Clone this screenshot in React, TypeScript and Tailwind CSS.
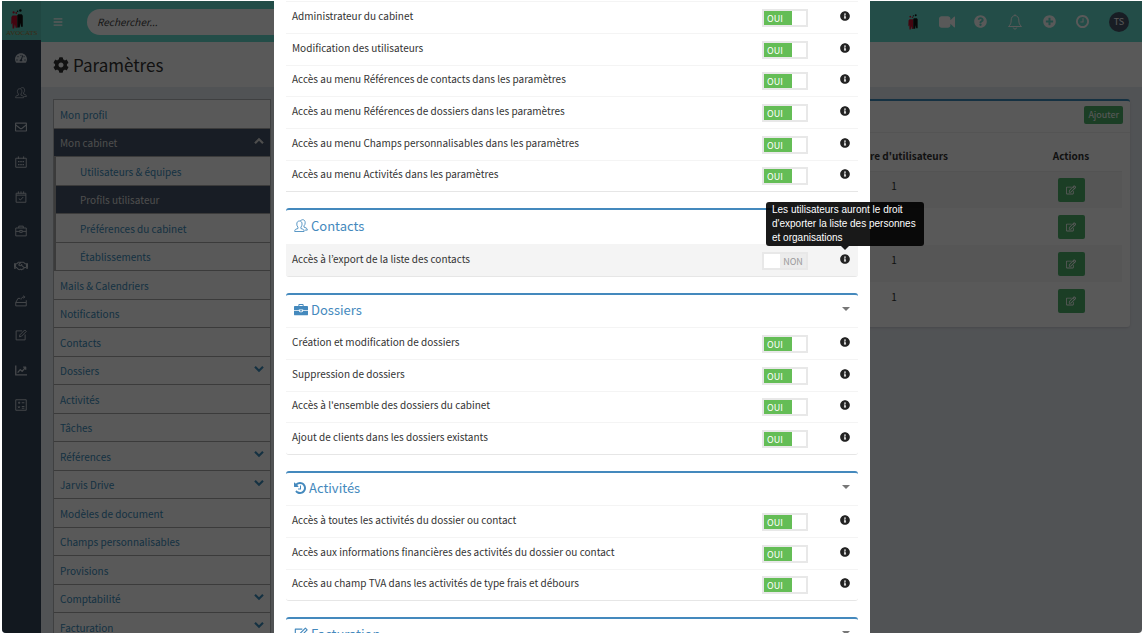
import { useState } from "react"
import type { ReactNode } from "react"
import {
  FaBars,
  FaCog,
  FaInfoCircle,
  FaPlusCircle,
  FaQuestionCircle,
  FaRegEdit,
  FaRegEnvelope,
  FaRegHandshake,
  FaTachometerAlt,
} from "react-icons/fa"

type MenuEntry = {
  label: string
  kind?: "parent" | "child" | "active"
  chevron?: boolean
}

const menu: MenuEntry[] = [
  { label: "Mon profil" },
  { label: "Mon cabinet", kind: "parent" },
  { label: "Utilisateurs & équipes", kind: "child" },
  { label: "Profils utilisateur", kind: "active" },
  { label: "Préférences du cabinet", kind: "child" },
  { label: "Établissements", kind: "child" },
  { label: "Mails & Calendriers" },
  { label: "Notifications" },
  { label: "Contacts" },
  { label: "Dossiers", chevron: true },
  { label: "Activités" },
  { label: "Tâches" },
  { label: "Références", chevron: true },
  { label: "Jarvis Drive", chevron: true },
  { label: "Modèles de document" },
  { label: "Champs personnalisables" },
  { label: "Provisions" },
  { label: "Comptabilité", chevron: true },
  { label: "Facturation", chevron: true },
]

const cabinetRights = [
  "Administrateur du cabinet",
  "Modification des utilisateurs",
  "Accès au menu Références de contacts dans les paramètres",
  "Accès au menu Références de dossiers dans les paramètres",
  "Accès au menu Champs personnalisables dans les paramètres",
  "Accès au menu Activités dans les paramètres",
]

const folderRights = [
  "Création et modification de dossiers",
  "Suppression de dossiers",
  "Accès à l'ensemble des dossiers du cabinet",
  "Ajout de clients dans les dossiers existants",
]

const activityRights = [
  "Accès à toutes les activités du dossier ou contact",
  "Accès aux informations financières des activités du dossier ou contact",
  "Accès au champ TVA dans les activités de type frais et débours",
]

// number of users in each profile
const userCounts = [1, 1, 1, 1]

/* ---------- icons ---------- */

function Line({ className, children, width = 1.3 }: { className: string; children: ReactNode; width?: number }) {
  return (
    <svg viewBox="0 0 16 16" className={className} fill="none" stroke="currentColor" strokeWidth={width} strokeLinejoin="round" aria-hidden="true">
      {children}
    </svg>
  )
}

function UsersIcon({ className }: { className: string }) {
  return (
    <Line className={className} width={1}>
      <path d="M.8 14.300h10.700c0-1.500-.4-2.300-1.500-2.700L7.900 10.900V9.300c.9-.9 1.300-2 1.300-3.500C9.200 3.500 8 2.300 6.200 2.300S3.200 3.500 3.200 5.800c0 1.500.4 2.600 1.300 3.500v1.600l-2.200.7C1.200 12 .8 12.800.8 14.300z" />
      <path d="M7.300 2.200C7.800 1.300 8.700.8 9.800.8c1.900 0 3 1.300 3 3.500 0 1.500-.5 2.700-1.400 3.500v1.500l2.400.9c1 .4 1.400 1.200 1.400 2.500h-3" />
    </Line>
  )
}

function BriefcaseIcon({ className }: { className: string }) {
  return (
    <svg viewBox="0 0 16 14" className={className} fill="currentColor" aria-hidden="true">
      <path d="M5 2.500V1.200C5 .6 5.400.2 6 .2h4c.6 0 1 .4 1 1v1.300h3.900c.6 0 1.100.4 1.100 1V7h-5.500v-.6h-5V7H0V3.500c0-.6.5-1 1.100-1zM6.100 2.500h3.800V1.300H6.100z" />
      <path d="M0 7.800h5.600C5.900 9 6.800 9.700 8 9.700s2.100-.7 2.400-1.900H16V12c0 .7-.4 1.100-1.100 1.100H1.100C.4 13.100 0 12.700 0 12z" />
      <path d="M6.600 7.300h2.800c0 .9-.6 1.400-1.400 1.400s-1.400-.5-1.400-1.400z" />
    </svg>
  )
}

function HistoryIcon({ className }: { className: string }) {
  return (
    <svg viewBox="0 0 1536 1792" className={className} fill="currentColor" aria-hidden="true">
      <path d="M1536 896q0 156-61 298t-164 245-245 164-298 61q-172 0-327-72.500T177 1387q-7-10-6.500-22.500t8.500-20.500l137-138q10-9 25-9 16 2 23 12 73 95 179 147t225 52q104 0 198.500-40.500T1130 1258t109.500-163.500T1280 896t-40.500-198.500T1130 534 966.500 424.500 768 384q-98 0-188 35.500T420 521l137 138q31 30 14 69-17 40-59 40H64q-26 0-45-19T0 704V256q0-42 40-59 39-17 69 14l130 129q107-101 244.500-156.500T768 128q156 0 298 61t245 164 164 245 61 298zM896 608v448q0 14-9 23t-23 9H544q-14 0-23-9t-9-23v-64q0-14 9-23t23-9h224V608q0-14 9-23t23-9h64q14 0 23 9t9 23z" />
    </svg>
  )
}

function CameraIcon({ className }: { className: string }) {
  return (
    <svg viewBox="0 0 1792 1792" className={className} fill="currentColor" aria-hidden="true">
      <path d="M1792 352v1088q0 42-39 59-13 5-25 5-27 0-45-19l-403-403v166q0 119-84.500 203.500T992 1536H288q-119 0-203.500-84.500T0 1248V544q0-119 84.500-203.500T288 256h704q119 0 203.500 84.500T1280 544v165l403-402q18-19 45-19 12 0 25 5 39 17 39 59z" />
    </svg>
  )
}

function ClockIcon({ className }: { className: string }) {
  return (
    <svg viewBox="0 128 1536 1536" className={className} fill="currentColor" aria-hidden="true">
      <path d="M896 544v448q0 14-9 23t-23 9H544q-14 0-23-9t-9-23v-64q0-14 9-23t23-9h224V544q0-14 9-23t23-9h64q14 0 23 9t9 23zm416 352q0-148-73-273t-198-198-273-73-273 73-198 198-73 273 73 273 198 198 273 73 273-73 198-198 73-273zm224 0q0 209-103 385.500T1153.500 1561 768 1664t-385.500-103T103 1281.500 0 896t103-385.500T382.500 231 768 128t385.500 103T1433 510.500 1536 896z" />
    </svg>
  )
}

function BellIcon({ className }: { className: string }) {
  return (
    <Line className={className} width={1}>
      <path d="M8 1.500c-2.500.3-3.800 2-3.800 4.500 0 3.200-.7 4.800-2.700 6.500h13c-2-1.700-2.700-3.300-2.700-6.500 0-2.500-1.300-4.200-3.800-4.500z" />
      <path d="M8 .3v1.200M6.300 13.600c.2 1 .8 1.500 1.700 1.500s1.500-.5 1.700-1.500" />
    </Line>
  )
}

function ChevronIcon({ className }: { className: string }) {
  return (
    <svg viewBox="0 0 12 8" className={className} fill="none" stroke="currentColor" strokeWidth="2.600" aria-hidden="true">
      <path d="M1.200 1.400 6 6.100l4.800-4.700" />
    </svg>
  )
}

function FiguresIcon({ className }: { className: string }) {
  return (
    <svg viewBox="0 0 12 20" className={className} aria-hidden="true">
      <circle cx="2.600" cy="3.400" r="1.100" fill="#c0102e" />
      <circle cx="5.300" cy="4" r=".9" fill="#c0102e" />
      <circle cx="9.400" cy="1.500" r="1.200" fill="#111" />
      <circle cx="6.600" cy="2.300" r=".8" fill="#111" />
      <path d="M.4 8 1.600 6.600h4.700v12.200H4.600l-.7-3.600-.8 4.300H1.600L1.400 14 .2 15.600z" fill="#c0102e" />
      <path d="M6.300 6.300 7.200 5.200h3.600l1 1.500v11H10l-.5-3.600-.8 4.400H6.300z" fill="#111" />
    </svg>
  )
}

function EditLineIcon({ className }: { className: string }) {
  return (
    <Line className={className}>
      <path d="M9.500 2.500H1.500v12h12V7.300" />
      <path d="M6 10.400l.5-2.600L13 1.300l2 2-6.500 6.500z" />
    </Line>
  )
}

const railIcons: { name: string; icon: ReactNode }[] = [
  { name: "Tableau de bord", icon: <FaTachometerAlt className="size-3" /> },
  { name: "Contacts", icon: <UsersIcon className="size-3" /> },
  { name: "Messages", icon: <FaRegEnvelope className="size-3" /> },
  {
    name: "Calendrier",
    icon: (
      <Line className="size-3">
        <path d="M1 3h14v12H1zM4.500.5V4M11.500.5V4" />
        <path d="M4 7.500h2M7 7.500h2M10 7.500h2M4 11.500h2M7 11.500h2M10 11.500h2" strokeWidth="1.800" />
      </Line>
    ),
  },
  {
    name: "Tâches",
    icon: (
      <Line className="size-3">
        <path d="M1.500 3h13v12h-13zM1.500 5.500h13M4.500.5v3M8 .5v3M11.500.5v3M5 10l2.200 2L11 8" />
      </Line>
    ),
  },
  {
    name: "Dossiers",
    icon: (
      <Line className="size-3">
        <path d="M1 4h14v10.500H1zM5 4V1.500h6V4M1 8.500h5M10 8.500h5M6.300 7.200h3.400v2.600H6.300z" />
      </Line>
    ),
  },
  { name: "Clients", icon: <FaRegHandshake className="size-3.5" /> },
  {
    name: "Drive",
    icon: (
      <Line className="size-3">
        <path d="M1 10h14v4.500H1zM1 10l3-5.500h3M15 10V7M8 6c.5-2.500 2-3.500 4.500-3.500M11 1l2 1.500L11.500 4.500" />
      </Line>
    ),
  },
  { name: "Notes", icon: <EditLineIcon className="size-3" /> },
  {
    name: "Statistiques",
    icon: (
      <Line className="size-3" width={1.8}>
        <path d="M1 2v12.500h15M3.500 11.500l3.500-4 2.500 2.300L14 4.500M10.800 4.200h3.400v3.300" />
      </Line>
    ),
  },
  {
    name: "Comptabilité",
    icon: (
      <Line className="size-3">
        <path d="M1 1h14v14H1zM4 5h3M5.500 3.500v3M9 5h3.500M4 9.700l2.500 2.500M6.500 9.700 4 12.200M9 10h3.500M9 12.300h3.500" />
      </Line>
    ),
  },
]

/* ---------- dialog parts ---------- */

function Toggle({ label, initial }: { label: string; initial: boolean }) {
  const [on, setOn] = useState(initial)
  return (
    <label className="relative flex h-[18px] w-[46px] border-2 border-[#e8e8e8] text-[9px] leading-4">
      <input
        type="checkbox"
        checked={on}
        onChange={() => setOn(!on)}
        aria-label={label}
        className="absolute inset-0 size-full cursor-pointer opacity-0"
      />
      {on ? (
        <>
          <span className="w-7 bg-[#64bd56] pl-[3px] text-white">OUI</span>
          <span className="flex-1 bg-white" />
        </>
      ) : (
        <>
          <span className="w-4 bg-white" />
          <span className="flex-1 bg-[#ececec] text-center text-[#999]">NON</span>
        </>
      )}
    </label>
  )
}

function RightRow({ label, on = true, tooltip }: { label: string; on?: boolean; tooltip?: string }) {
  return (
    <li
      className={`flex h-8 items-center border-t border-[#f4f4f4] pl-1.5 nth-[3n]:h-[31px] ${tooltip ? "bg-[#f4f4f4]" : ""}`}
    >
      <span className="flex-1 pb-1 leading-4">{label}</span>
      <Toggle label={label} initial={on} />
      <span className="relative ml-8 flex pr-2 pb-1">
        <FaInfoCircle className="size-2.5 text-[#222]" />
        {tooltip && (
          <span
            role="tooltip"
            className="absolute -left-[74px] bottom-[18px] mb-1 w-[158px] rounded-[3px] bg-black/90 px-1.5 py-px font-['Liberation_Sans',Arial,sans-serif] text-[10px] leading-[14px] text-white"
          >
            {tooltip}
            <span className="absolute top-full left-[75px] border-4 border-b-0 border-transparent border-t-black/90" />
          </span>
        )}
      </span>
    </li>
  )
}

function Panel({ title, icon, tall, caret = true, children }: { title: string; icon: ReactNode; tall?: boolean; caret?: boolean; children?: ReactNode }) {
  return (
    <section className="mb-4 rounded-[3px] border-t-2 border-b border-t-[#4489bd] border-b-[#e6e6e6]">
      <header className={`flex items-center justify-between px-2 ${tall ? "h-[34px]" : "h-8"}`}>
        <h2 className="flex items-center gap-[3px] pb-0.5 text-[13px] leading-4 text-[#4489bd]">
          {icon}
          {title}
        </h2>
        {caret && (
          <button type="button" aria-label={`Replier ${title}`} className="pb-1">
            <span className="block border-4 border-b-0 border-transparent border-t-[#777]" />
          </button>
        )}
      </header>
      <ul>{children}</ul>
    </section>
  )
}

function RightsDialog() {
  return (
    <div role="dialog" aria-label="Droits du profil" className="relative mx-auto h-full w-[596px] max-w-full bg-white px-3 text-[10px] text-[#333]">
      <ul className="mb-4 border-b border-[#e6e6e6]">
        {cabinetRights.map((right) => (
          <RightRow key={right} label={right} />
        ))}
      </ul>
      <Panel title="Contacts" tall caret={false} icon={<UsersIcon className="size-3.5" />}>
        <RightRow
          label="Accès à l’export de la liste des contacts"
          on={false}
          tooltip="Les utilisateurs auront le droit d'exporter la liste des personnes et organisations"
        />
      </Panel>
      <Panel title="Dossiers" icon={<BriefcaseIcon className="size-3.5" />}>
        {folderRights.map((right) => (
          <RightRow key={right} label={right} />
        ))}
      </Panel>
      <Panel title="Activités" icon={<HistoryIcon className="h-3.5 w-3" />}>
        {activityRights.map((right) => (
          <RightRow key={right} label={right} />
        ))}
      </Panel>
      <Panel title="Facturation" icon={<EditLineIcon className="size-3.5" />} />
    </div>
  )
}

/* ---------- page behind the dialog ---------- */

function TopBar() {
  return (
    <header className="flex h-[41px] shrink-0 items-center bg-[#65dccd] pr-[13px] text-white">
      <button type="button" aria-label="Menu" className="ml-3">
        <FaBars className="size-2.5" />
      </button>
      <input
        type="search"
        aria-label="Rechercher"
        placeholder="Rechercher..."
        className="ml-6 h-[26px] w-80 rounded-full bg-white px-2.5 text-[10px] italic placeholder:text-[#444]"
      />
      <div className="ml-auto flex items-center">
        <FiguresIcon className="mr-5 h-4 w-3" />
        <button type="button" aria-label="Vidéo" className="mr-[19px]"><CameraIcon className="size-4" /></button>
        <button type="button" aria-label="Aide" className="mr-5"><FaQuestionCircle className="size-[13px]" /></button>
        <button type="button" aria-label="Alertes" className="mr-5"><BellIcon className="size-4" /></button>
        <button type="button" aria-label="Ajouter" className="mr-5"><FaPlusCircle className="size-[13px]" /></button>
        <button type="button" aria-label="Historique" className="mr-5"><ClockIcon className="size-[13px]" /></button>
        <span className="flex size-5 items-center justify-center rounded-full bg-[#455468] text-[9px]">TS</span>
      </div>
    </header>
  )
}

function SettingsMenu() {
  return (
    <nav className="w-[218px] shrink-0 self-start border border-[#b5b8bb] bg-white text-[10px]">
      {menu.map(({ label, kind, chevron }) => {
        const dark = kind === "parent" || kind === "active"
        const nested = kind === "child" || kind === "active"
        return (
          <a
            key={label}
            href="#"
            className={`flex h-7 items-center justify-between border-b border-[#aaa] pr-1.5 odd:h-[29px] ${
              nested ? "border-l-2 border-l-[#aaa] pl-6" : "pl-1.5"
            } ${dark ? "bg-[#46556a] text-[#ddd]" : "text-[#3c8dbc]"}`}
          >
            {label}
            {kind === "parent" && <ChevronIcon className="mb-1 h-2 w-2.5 rotate-180" />}
            {chevron && <ChevronIcon className="mb-1 h-2 w-2.5" />}
          </a>
        )
      })}
    </nav>
  )
}

function ProfilesTable() {
  return (
    <section className="flex-1 self-start rounded-[3px] border-t-2 border-[#3c8dbc] bg-white shadow-sm">
      <div className="flex h-8 items-center justify-end border-b border-[#f0f0f0] pr-[7px] pb-1">
        <button type="button" className="h-[18px] rounded-[2px] bg-[#4fb26c] px-1 text-[9px] leading-4 text-white">
          Ajouter
        </button>
      </div>
      <div className="p-2">
        <table className="w-full text-center text-[10px] text-[#333]">
          <thead>
            <tr className="h-[30px] border-b border-[#eee]">
              <th />
              <th className="w-[252px]">Nombre d'utilisateurs</th>
              <th className="w-[102px]">Actions</th>
            </tr>
          </thead>
          <tbody>
            {userCounts.map((count, index) => (
              <tr key={index} className="h-[37px] odd:bg-[#f7f7f7]">
                <td />
                <td className="pb-2">{count}</td>
                <td>
                  <button type="button" aria-label="Modifier" className="inline-flex h-6 w-[27px] items-center justify-center rounded-[2px] bg-[#4fb26c] align-middle text-white">
                    <FaRegEdit className="size-2.5" />
                  </button>
                </td>
              </tr>
            ))}
          </tbody>
        </table>
      </div>
    </section>
  )
}

export default function App() {
  return (
    <div className="h-screen bg-white px-0.5 py-px font-['Noto_Sans_CJK_KR',sans-serif]">
      <div className="relative h-full overflow-hidden rounded-b">
        <div className="flex h-full">
          <aside className="flex w-[39px] shrink-0 flex-col bg-[#34455a]">
            <div className="flex h-[39px] flex-col bg-[#5ccbbd] pt-2 pl-1">
              <FiguresIcon className="ml-1 h-5 w-3.5" />
              <span className="font-['Liberation_Serif',serif] text-[7px] leading-[8px] text-[#a87838]">AVOCATS</span>
            </div>
            <nav className="flex flex-col items-center pr-px">
              {railIcons.map(({ name, icon }) => (
                <a key={name} href="#" aria-label={name} className="flex h-[35px] items-center text-[#c4ccd4] nth-[3n]:h-[34px]">
                  {icon}
                </a>
              ))}
            </nav>
          </aside>
          <main className="flex min-w-0 flex-1 flex-col bg-[#e9edf3]">
            <TopBar />
            <h1 className="flex h-[45px] shrink-0 items-center gap-1 bg-white pl-3 text-[17px] text-[#333]">
              <FaCog className="size-4" />
              Paramètres
            </h1>
            <div className="flex min-h-0 flex-1 gap-3 overflow-hidden pt-3 pr-3 pl-3">
              <SettingsMenu />
              <ProfilesTable />
            </div>
          </main>
        </div>
        <div className="absolute inset-0 bg-black/65">
          <RightsDialog />
        </div>
      </div>
    </div>
  )
}
